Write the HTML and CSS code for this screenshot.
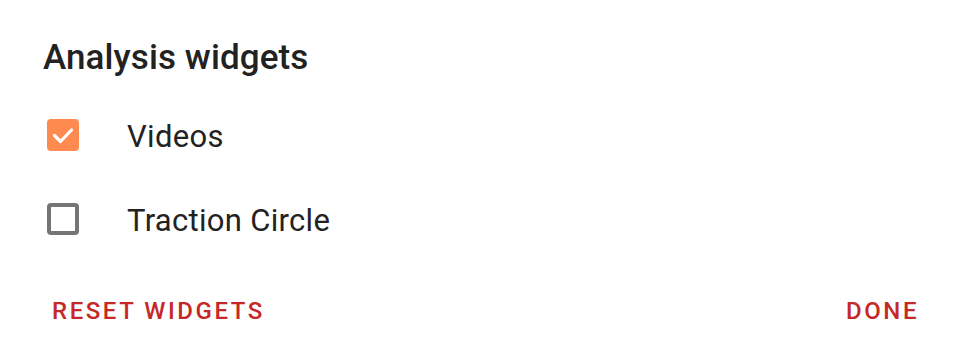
FILE: index.html
```html
<!DOCTYPE html>
<html>
<head>
<meta charset="utf-8">
<link rel="stylesheet" href="styles.css">
</head>
<body>
<div class="dialog">
  <h1 class="title">Analysis widgets</h1>
  <ul class="options">
    <li class="option">
      <span class="box checked">
        <svg viewBox="0 0 32 32" width="32" height="32"><path d="M7.5 16.5 L13.5 22.5 L24.5 11" fill="none" stroke="#fff" stroke-width="3.2" stroke-linecap="round" stroke-linejoin="round"/></svg>
      </span>
      <span class="label">Videos</span>
    </li>
    <li class="option">
      <span class="box"></span>
      <span class="label">Traction Circle</span>
    </li>
  </ul>
  <div class="actions">
    <button class="btn">RESET WIDGETS</button>
    <button class="btn">DONE</button>
  </div>
</div>
</body>
</html>
```
FILE: styles.css
```css
* { box-sizing: border-box; }
html, body { margin: 0; padding: 0; background: #fff; }
body { width: 960px; height: 359px; overflow: hidden; font-family: Roboto, "Liberation Sans", sans-serif; }
.dialog { height: 359px; padding: 36px 0 0 43px; background: #fff; display: flex; flex-direction: column; }
.title { margin: 0; font-size: 35px; font-weight: 500; color: #222; line-height: 44px; letter-spacing: 0.1px; }
.options { list-style: none; margin: 39px 0 0 0; padding: 0; display: flex; flex-direction: column; gap: 52px; }
.option { display: flex; align-items: center; height: 32px; }
.box { width: 32px; height: 32px; margin-left: 4px; border: 4px solid #757575; border-radius: 4px; display: flex; align-items: center; justify-content: center; flex: none; }
.box.checked { background: #ff8a4f; border: none; }
.box svg { display: block; }
.label { margin-left: 48px; font-size: 31px; line-height: 32px; padding-top: 3px; color: #222; letter-spacing: 0.3px; }
.actions { display: flex; justify-content: space-between; margin-top: 62px; padding: 0 41px 0 9px; }
.btn { background: none; border: none; padding: 0; font-family: Roboto, "Liberation Sans", sans-serif; font-size: 24px; line-height: 28px; font-weight: 500; letter-spacing: 2.55px; color: #c62828; }
```
